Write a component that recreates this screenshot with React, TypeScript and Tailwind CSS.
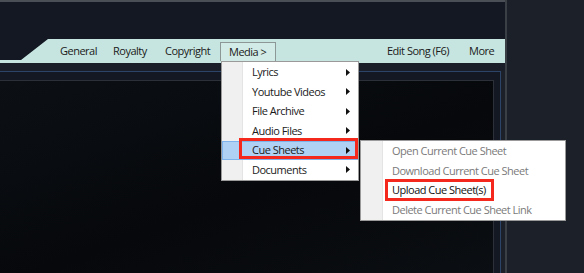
import React from "react";

const font = { fontFamily: '"Open Sans", "Noto Sans", Arial, sans-serif' };

const MEDIA_ITEMS = ["Lyrics", "Youtube Videos", "File Archive", "Audio Files", "Cue Sheets", "Documents"];

const CUE_ITEMS = [
  { label: "Open Current Cue Sheet", enabled: false },
  { label: "Download Current Cue Sheet", enabled: false },
  { label: "Upload Cue Sheet(s)", enabled: true },
  { label: "Delete Current Cue Sheet Link", enabled: false },
];

function Arrow() {
  return (
    <svg width="4" height="7" viewBox="0 0 4 7" className="shrink-0">
      <polygon points="0,0 4,3.5 0,7" fill="#111" />
    </svg>
  );
}

export default function App() {
  return (
    <div
      className="relative flex w-[584px] h-[273px] overflow-hidden bg-[#1c2129] text-[11px] tracking-[-0.5px] text-[#1a1a1a]"
      style={font}
    >
      {/* main panel */}
      <div className="flex flex-col w-[505px] shrink-0">
        <div className="h-[2px] bg-[#4a4e55]" />
        <div className="h-[37px] bg-[#131822]" />

        {/* tab bar */}
        <div className="relative h-[24px] bg-[#131822]">
          <div className="absolute inset-0 bg-[#c6e5e0] [clip-path:polygon(0_21px,21px_21px,48px_0,100%_0,100%_100%,0_100%)]" />
          <div className="relative flex h-full items-center pl-[60px]">
            <span className="w-[53px]">General</span>
            <span className="w-[52px]">Royalty</span>
            <span className="w-[55px]">Copyright</span>
            <span className="self-end mb-[2px] flex h-[19px] w-[56px] items-center border border-b-0 border-[#8c9896] bg-[#d3ebe7] pl-[8px]">
              Media &gt;
            </span>
            <span className="ml-auto w-[82px]">Edit Song (F6)</span>
            <span className="w-[36px]">More</span>
          </div>
        </div>

        <div className="h-[8px] bg-[#191e28]" />

        {/* content frames */}
        <div className="flex flex-1 flex-col mr-[4px] border-t border-r border-[#2d4469] bg-[#131822] pt-[8px] pr-[6px]">
          <div className="flex-1 border-t border-r border-[#2c3038] bg-[linear-gradient(160deg,#0c1015,#06080b_55%,#0b0e12)]" />
        </div>
      </div>

      <div className="w-[2px] shrink-0 bg-[#3a3e45]" />
      <div className="flex-1 bg-[#1c2129]" />

      {/* Media dropdown */}
      <div className="absolute left-[221px] top-[61px] w-[138px] h-[120px] border border-[#9a9a9a] bg-white py-[0.5px]">
        <div className="absolute left-0 top-0 bottom-0 w-[21px] bg-[#f0f0f0] border-r border-[#e4e4e4]" />
        {MEDIA_ITEMS.map((item) => {
          const active = item === "Cue Sheets";
          return (
            <div
              key={item}
              className={`relative flex h-[19.5px] items-center pl-[30px] pr-[8px] ${
                active ? "bg-[#afd1f3] outline outline-1 -outline-offset-1 outline-[#7db3ea]" : ""
              }`}
            >
              <span className="flex-1">{item}</span>
              <Arrow />
            </div>
          );
        })}
      </div>

      {/* Cue Sheets submenu */}
      <div className="absolute left-[360px] top-[140px] w-[206px] h-[81px] border border-[#9a9a9a] bg-white py-[0.5px]">
        <div className="absolute left-0 top-0 bottom-0 w-[22px] bg-[#f0f0f0] border-r border-[#e4e4e4]" />
        {CUE_ITEMS.map((item) => (
          <div
            key={item.label}
            className={`relative flex h-[19.5px] items-center pl-[31px] ${
              item.enabled ? "text-[#111] font-medium" : "text-[#7a7a7a]"
            }`}
          >
            {item.label}
          </div>
        ))}
      </div>

      {/* red highlight boxes */}
      <div className="absolute left-[239px] top-[138px] w-[119px] h-[21px] border-[3px] border-[#f4281c]" />
      <div className="absolute left-[385px] top-[179px] w-[109px] h-[22px] border-[3px] border-[#f4281c]" />
    </div>
  );
}
